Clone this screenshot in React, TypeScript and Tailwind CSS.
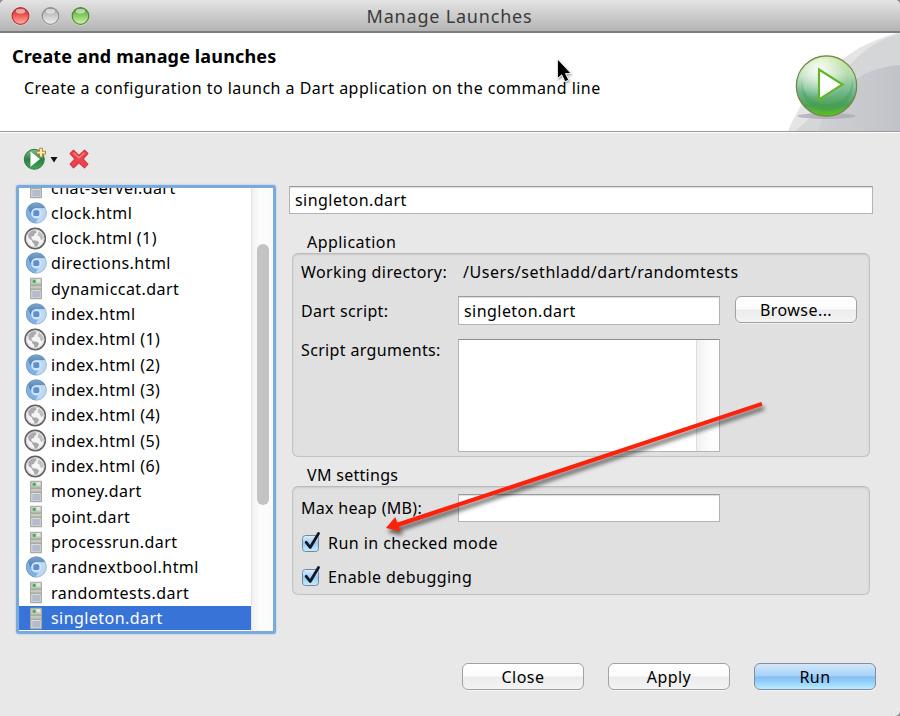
import React from "react";

type Kind = "dart" | "chrome" | "globe";

const launches: { name: string; kind: Kind }[] = [
  { name: "chat-server.dart", kind: "dart" },
  { name: "clock.html", kind: "chrome" },
  { name: "clock.html (1)", kind: "globe" },
  { name: "directions.html", kind: "chrome" },
  { name: "dynamiccat.dart", kind: "dart" },
  { name: "index.html", kind: "chrome" },
  { name: "index.html (1)", kind: "globe" },
  { name: "index.html (2)", kind: "chrome" },
  { name: "index.html (3)", kind: "chrome" },
  { name: "index.html (4)", kind: "globe" },
  { name: "index.html (5)", kind: "globe" },
  { name: "index.html (6)", kind: "globe" },
  { name: "money.dart", kind: "dart" },
  { name: "point.dart", kind: "dart" },
  { name: "processrun.dart", kind: "dart" },
  { name: "randnextbool.html", kind: "chrome" },
  { name: "randomtests.dart", kind: "dart" },
  { name: "singleton.dart", kind: "dart" },
];

function ServerIcon() {
  return (
    <svg className="block h-[23px] w-[22px]" viewBox="0 0 22 23">
      <rect x="5" y="0.7" width="12" height="21.6" rx="1" fill="#a9ada0" />
      <rect x="6" y="1.7" width="10" height="5.6" fill="#c3c8be" />
      <rect x="11.5" y="2" width="3.8" height="3.4" fill="#e3e7e4" />
      <circle cx="9.2" cy="4.4" r="1.6" fill="#3fae5c" />
      <rect x="6" y="9" width="10" height="2.4" fill="#c6cac2" />
      <rect x="6.4" y="13.2" width="9.2" height="7.8" fill="#e6e8ec" />
      <rect x="7.2" y="14" width="8" height="6.6" fill="#b5bbcd" />
    </svg>
  );
}

function ChromeIcon() {
  return (
    <svg className="block h-[22px] w-[22px]" viewBox="0 0 22 22">
      <defs>
        <linearGradient id="cap" x1="0" y1="0" x2="0" y2="1">
          <stop offset="0" stopColor="#7fa6cc" />
          <stop offset="1" stopColor="#3f74a8" />
        </linearGradient>
      </defs>
      <circle cx="11.3" cy="11" r="10.4" fill="#a9cbee" />
      <path d="M11.300 .6a10.4 10.4 0 0 0-8.900 5l3.900 7.700 5-7.100h9.200A10.4 10.4 0 0 0 11.300.6z" fill="url(#cap)" />
      <path d="M2.400 5.600a10.4 10.4 0 0 0 7.800 15.700l4-6.500-5 .6-3-2.500z" fill="#82b0e0" />
      <path d="M20.500 6.200h-9.200l4.600 6.200-5.700 8.900A10.4 10.4 0 0 0 20.500 6.200z" fill="#bcd8f3" />
      <circle cx="11.3" cy="11.2" r="5.200" fill="#d3e5f8" />
      <rect x="8.300" y="8.200" width="6" height="5.800" rx="1.500" fill="#5c8fd3" />
      <circle cx="11.3" cy="11" r="10" fill="none" stroke="#668bb3" strokeOpacity=".4" strokeWidth=".8" />
    </svg>
  );
}

function GlobeIcon() {
  return (
    <svg className="block h-[23px] w-[23px]" viewBox="0 0 23 23">
      <circle cx="11.2" cy="11.5" r="10.1" fill="#f5f5f5" stroke="#626262" strokeWidth="1.6" />
      <circle cx="11.2" cy="11.5" r="8.7" fill="none" stroke="#d4d4d4" strokeWidth="1" />
      <path d="M4.2 7.2 7.5 3.7l4.2-.5 1 2.2-2.2 1.6-.4 2-2.6.6.2 2.3 2 1.5-1.500.4-3.600-2.600z" fill="#ababab" />
      <path d="m8.4 13.2 4.7.5 2.100 2-1.700 3-2.700 1.200-1-3.300-1.700-1.600z" fill="#a8a8a8" />
      <path d="m14.7 4.2 3.600 3 1.200 4.400-2.400 1.600-1.600-3.600-2.100-1.300z" fill="#c0c0c0" />
    </svg>
  );
}

function LaunchRow({ name, kind, selected }: { name: string; kind: Kind; selected: boolean }) {
  return (
    <div className={"flex h-[25.33px] shrink-0 items-start " + (selected ? "text-white" : "text-black")}>
      <div className={"flex h-6 w-full items-center pl-[5px] " + (selected ? "bg-[#3874d7]" : "")}>
        <div className="flex w-[23px] shrink-0 justify-center">
          {kind === "dart" ? <ServerIcon /> : kind === "chrome" ? <ChromeIcon /> : <GlobeIcon />}
        </div>
        <span className="ml-1 whitespace-nowrap">{name}</span>
      </div>
    </div>
  );
}

function TrafficLight({ dark, mid, light }: { dark: string; mid: string; light: string }) {
  const id = "light" + mid.slice(1);
  return (
    <svg className="block h-[20px] w-[20px]" viewBox="0 0 20 20">
      <defs>
        <linearGradient id={id} x1="0" y1="0" x2="0" y2="1">
          <stop offset="0" stopColor={dark} />
          <stop offset=".4" stopColor={mid} />
          <stop offset="1" stopColor={light} />
        </linearGradient>
      </defs>
      <circle cx="9.500" cy="10.8" r="8.8" fill="#fff" fillOpacity=".5" />
      <circle cx="9.500" cy="10" r="8.3" fill={`url(#${id})`} stroke={dark} strokeWidth="1.2" />
      <ellipse cx="9.500" cy="5.2" rx="4.6" ry="2.4" fill="#fff" fillOpacity=".55" />
    </svg>
  );
}

function Banner() {
  return (
    <svg className="block h-[98px] w-[120px]" viewBox="780 33 120 98">
      <defs>
        <linearGradient id="ball" x1="0" y1="0" x2="0" y2="1">
          <stop offset="0" stopColor="#b9e48c" />
          <stop offset=".3" stopColor="#b5dcb0" />
          <stop offset=".62" stopColor="#6db588" />
          <stop offset=".82" stopColor="#4da152" />
          <stop offset="1" stopColor="#5cc21c" />
        </linearGradient>
        <radialGradient id="shine" cx=".38" cy=".22" r=".5">
          <stop offset="0" stopColor="#fff" stopOpacity=".95" />
          <stop offset="1" stopColor="#fff" stopOpacity="0" />
        </radialGradient>
        <linearGradient id="swoosh" x1="0" y1="0" x2="1" y2="0">
          <stop offset="0" stopColor="#cfd0d3" />
          <stop offset="1" stopColor="#c2c3c8" />
        </linearGradient>
      </defs>
      <path d="M788 131C803 96 833 50 897 33h3v98z" fill="#e5e5e6" />
      <path d="M795 131C828 108 843 47 900 34v97z" fill="#d5d6d8" />
      <path d="M818 131C829 97 855 68 900 65v66z" fill="url(#swoosh)" />
      <ellipse cx="826.5" cy="116" rx="29" ry="3" fill="#a9a9b1" fillOpacity=".75" />
      <circle cx="826.5" cy="86" r="30.2" fill="url(#ball)" stroke="#76824d" strokeWidth="1.2" />
      <path d="M802 78a26 26 0 1 0 50 0c0 17-11 26-25 26s-25-9-25-26z" fill="#3c9460" fillOpacity=".3" />
      <circle cx="826.5" cy="86" r="29" fill="url(#shine)" />
      <path d="m819 69.500 23.500 15L819 99.500z" fill="#fff" stroke="#65b52c" strokeWidth="2.200" />
    </svg>
  );
}

function NewLaunchIcon() {
  return (
    <svg className="block h-[24px] w-[24px]" viewBox="23 147 24 24">
      <defs>
        <linearGradient id="newball" x1="0" y1="0" x2="0" y2="1">
          <stop offset="0" stopColor="#83bd82" />
          <stop offset=".5" stopColor="#2b8147" />
          <stop offset="1" stopColor="#45a353" />
        </linearGradient>
      </defs>
      <circle cx="34.300" cy="159.300" r="10" fill="url(#newball)" stroke="#2c7a3e" />
      <path d="m30.500 151.500 9.500 7.500-9.500 7.800z" fill="#fff" />
      <path d="M41 147.800v9.800M36.200 152.600h9.800" stroke="#b08a3c" strokeWidth="3.600" />
      <path d="M41 148.800v7.800M37.200 152.600h7.800" stroke="#ffebaa" strokeWidth="1.900" />
    </svg>
  );
}

function DeleteIcon() {
  return (
    <svg className="block h-[20px] w-[20px]" viewBox="0 0 20 20">
      <path
        d="M4.500 1.200 10 6.400l5.500-5.200 3.400 3.300L14 10l4.900 5.200-3.400 3.600-5.500-5.100-5.500 5.100-3.400-3.600L6 10 1.100 4.500z"
        fill="#ec4350"
        stroke="#d53a45"
        strokeWidth="1.200"
        strokeLinejoin="round"
      />
      <path d="m4.500 3.800 5.500 5 5.500-5" fill="none" stroke="#fb7d80" strokeWidth="1.500" />
    </svg>
  );
}

function PushButton({ label, primary = false }: { label: string; primary?: boolean }) {
  return (
    <button
      className={
        "flex h-[27px] w-[122px] shrink-0 items-center justify-center rounded-[6px] border shadow-[0_1px_0_#ffffff80] " +
        (primary
          ? "border-[#858ca0] bg-[linear-gradient(#d5e7fa_0%,#a6d0f8_48%,#7fbdf5_52%,#b9ecff_100%)]"
          : "border-[#a1a1a1] bg-[linear-gradient(#ffffff_0%,#fbfbfb_48%,#ececec_52%,#f3f3f3_100%)]")
      }
    >
      {label}
    </button>
  );
}

function TextBox({ value, className }: { value: string; className: string }) {
  return (
    <div
      className={
        "flex items-center whitespace-nowrap border border-[#b4b4b4] border-t-[#9c9c9c] bg-white pl-[5px] shadow-[inset_0_1px_1px_#dcdcdc] " +
        className
      }
    >
      {value}
    </div>
  );
}

function Check({ label }: { label: string }) {
  return (
    <div className="flex h-[34px] items-center">
      <svg className="block h-[24px] w-[22px] shrink-0" viewBox="0 0 22 24">
        <defs>
          <linearGradient id="box" x1="0" y1="0" x2="0" y2="1">
            <stop offset="0" stopColor="#e0effc" />
            <stop offset=".5" stopColor="#9bcbf5" />
            <stop offset="1" stopColor="#c4efff" />
          </linearGradient>
        </defs>
        <rect x="1.500" y="4.500" width="16" height="16" rx="3" fill="url(#box)" stroke="#78849a" />
        <path d="m5.200 11.300 4 5.200 8.300-14" fill="none" stroke="#101828" strokeWidth="2.800" strokeLinecap="round" strokeLinejoin="round" />
      </svg>
      <span className="ml-[5px] whitespace-nowrap">{label}</span>
    </div>
  );
}

const panel =
  "rounded-[6px] border border-[#c2c2c2] border-t-[#bbbbbb] bg-[#e0e0e0] shadow-[inset_0_1px_2px_#c9c9c9]";

export default function App() {
  return (
    <div className="h-[716px] w-[900px] bg-[#8c8c8c]">
      <div className="relative flex h-[716px] w-[900px] flex-col overflow-hidden rounded-tl-[5px] rounded-r-[5px] bg-[#e8e8e8] font-['Noto_Sans',sans-serif] text-[16px] leading-[22px] tracking-[0.45px] text-black">
        <header className="grid h-[33px] shrink-0 grid-cols-[120px_1fr_132px] items-center border-b-2 border-[#7d7d7d] bg-[linear-gradient(#e4e4e4,#b4b4b4)] pl-[11px]">
          <div className="flex gap-[10px]">
            <TrafficLight dark="#b6322f" mid="#ee4f4b" light="#ffb4a8" />
            <TrafficLight dark="#909090" mid="#c4c4c4" light="#f1f1f1" />
            <TrafficLight dark="#4c8a35" mid="#7fc45c" light="#d1f5a6" />
          </div>
          <h1 className="text-center text-[18px] tracking-[0.8px] text-[#3a3a3a]">Manage Launches</h1>
        </header>

        <section className="flex h-[99px] shrink-0 justify-between border-b border-[#999999] bg-white">
          <div className="pt-3 pl-3">
            <h2 className="text-[18px] font-bold tracking-[0.15px]">Create and manage launches</h2>
            <p className="mt-[10px] ml-3 whitespace-nowrap tracking-[0.465px]">
              Create a configuration to launch a Dart application on the command line
            </p>
          </div>
          <Banner />
        </section>

        <main className="flex h-[502px] shrink-0 border-t border-white">
          <aside className="w-[276px] pl-4">
            <div className="flex h-[52px] items-center pl-[7px]">
              <NewLaunchIcon />
              <svg className="ml-[3px] block h-[7px] w-[8px]" viewBox="0 0 8 7">
                <path d="M.5 1h7L4 6.500z" fill="#111" />
              </svg>
              <div className="ml-[11px]">
                <DeleteIcon />
              </div>
            </div>
            <div className="flex h-[449px] w-[260px] overflow-hidden rounded-[3px] border-3 border-[#78abdc] bg-white shadow-[0_0_2px_#8fb8de]">
              <div className="-mt-[12.500px] flex h-[460px] w-[232px] flex-col">
                {launches.map((l) => (
                  <LaunchRow key={l.name} {...l} selected={l.name === "singleton.dart"} />
                ))}
              </div>
              <div className="flex flex-1 justify-center border-l border-[#e2e2e2] bg-[linear-gradient(90deg,#f1f1f1,#fcfcfc_40%,#fafafa)] pt-14">
                <div className="h-[261px] w-[12px] rounded-full bg-[#c3c3c3]" />
              </div>
            </div>
          </aside>

          <div className="flex flex-1 flex-col pt-[53px] pl-[13px]">
            <TextBox value="singleton.dart" className="h-[28px] w-[584px]" />
            <h3 className="mt-[17px] ml-[18px]">Application</h3>
            <div className={"ml-[3px] h-[204px] w-[578px] pl-2 " + panel}>
              <div className="mt-[6px] flex h-[24px] items-center">
                <span className="w-[162px] whitespace-nowrap tracking-[0.4px]">Working directory:</span>
                <span className="whitespace-nowrap tracking-[0.54px]">/Users/sethladd/dart/randomtests</span>
              </div>
              <div className="mt-[12px] flex h-[29px] items-center">
                <span className="w-[157px] tracking-[0.35px]">Dart script:</span>
                <TextBox value="singleton.dart" className="h-[29px] w-[262px]" />
                <div className="ml-[15px] pb-[2px]">
                  <PushButton label="Browse..." />
                </div>
              </div>
              <div className="mt-[14px] flex">
                <span className="w-[157px] tracking-[0.35px]">Script arguments:</span>
                <div className="flex h-[113px] w-[262px] justify-end border border-[#b4b4b4] border-t-[#8c8c8c] bg-white">
                  <div className="w-[23px] border-l border-[#dedede] bg-[linear-gradient(90deg,#f1f1f1,#fdfdfd_60%)]" />
                </div>
              </div>
            </div>
            <h3 className="mt-[7px] ml-[18px] tracking-[0.3px]">VM settings</h3>
            <div className={"ml-[3px] h-[109px] w-[578px] pl-2 " + panel}>
              <div className="mt-[7px] flex h-[28px] items-center">
                <span className="w-[157px] tracking-[0.3px]">Max heap (MB):</span>
                <TextBox value="" className="h-[28px] w-[262px]" />
              </div>
              <div className="mt-[4px]">
                <Check label="Run in checked mode" />
                <Check label="Enable debugging" />
              </div>
            </div>
          </div>
        </main>

        <footer className="mt-[29px] flex justify-end gap-6 pr-6">
          <PushButton label="Close" />
          <PushButton label="Apply" />
          <PushButton label="Run" primary />
        </footer>

        <svg className="pointer-events-none absolute inset-0 h-[716px] w-[900px]" viewBox="0 0 900 716">
          <defs>
            <filter id="drop" x="-10%" y="-10%" width="120%" height="130%">
              <feDropShadow dx="2" dy="4" stdDeviation="2" floodColor="#000" floodOpacity=".6" />
            </filter>
            <filter id="halo" x="-30%" y="-30%" width="170%" height="170%">
              <feDropShadow dx="1" dy="1.500" stdDeviation="1" floodColor="#000" floodOpacity=".4" />
            </filter>
          </defs>
          <g filter="url(#drop)" fill="#fb2409">
            <path d="m761.300 402 1.200 3.800-364.300 121.100-1.400-4.100z" />
            <path d="m386 528 9.200-11 5.600 14.500z" />
          </g>
          <path
            d="M557.500 59v19.500l4.200-3.800 3.300 7 3.700-1.700-3.300-6.500h5.600z"
            fill="#000"
            stroke="#fff"
            strokeWidth=".8"
            filter="url(#halo)"
          />
        </svg>
      </div>
    </div>
  );
}
